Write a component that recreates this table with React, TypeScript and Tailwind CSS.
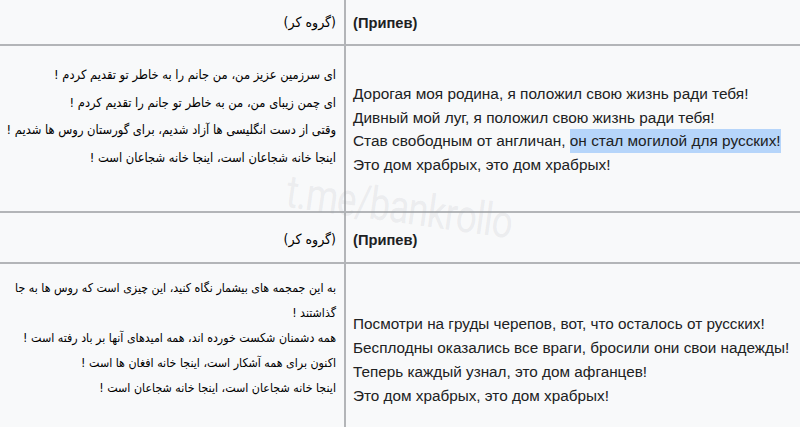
import React from 'react';

const fa = "font-['DejaVu_Sans_Condensed','DejaVu_Sans',sans-serif]";
const ru = "font-['Liberation_Sans',Arial,sans-serif]";

const verse1Fa = [
  'ای سرزمین عزیز من، من جانم را به خاطر تو تقدیم کردم !',
  'ای چمن زیبای من، من به خاطر تو جانم را تقدیم کردم !',
  'وقتی از دست انگلیسی ها آزاد شدیم، برای گورستان روس ها شدیم !',
  'اینجا خانه شجاعان است، اینجا خانه شجاعان است !',
];

const verse2Fa = [
  'به این جمجمه های بیشمار نگاه کنید، این چیزی است که روس ها به جا',
  'گذاشتند !',
  'همه دشمنان شکست خورده اند، همه امیدهای آنها بر باد رفته است !',
  'اکنون برای همه آشکار است، اینجا خانه افغان ها است !',
  'اینجا خانه شجاعان است، اینجا خانه شجاعان است !',
];

const verse2Ru = [
  'Посмотри на груды черепов, вот, что осталось от русских!',
  'Бесплодны оказались все враги, бросили они свои надежды!',
  'Теперь каждый узнал, это дом афганцев!',
  'Это дом храбрых, это дом храбрых!',
];

const FaCell = ({ lines, className }: { lines: string[]; className: string }) => (
  <div dir="rtl" className={`border-r-2 border-[#b3b5b8] pr-2 text-right text-black whitespace-nowrap ${fa} ${className}`}>
    {lines.map(l => (
      <div key={l}>{l}</div>
    ))}
  </div>
);

export default function App() {
  return (
    <div className="relative w-[800px] h-[427px] overflow-hidden bg-[#f8f9fa]">
      <div className="grid grid-cols-[346px_1fr]">
        {/* chorus */}
        <FaCell lines={['(گروه کر)']} className="h-[46px] border-b-2 border-b-[#b3b5b8] pt-[11px] text-[14px] leading-[22px]" />
        <div className={`h-[46px] border-b-2 border-[#b3b5b8] pl-[7px] pt-[12px] text-[14.7px] font-bold leading-[22px] text-[#202122] ${ru}`}>(Припев)</div>

        {/* verse 1 */}
        <FaCell lines={verse1Fa} className="h-[167px] border-b-2 border-b-[#b3b5b8] pt-[15px] text-[12.8px] leading-[27.7px]" />
        <div className={`h-[167px] border-b-2 border-[#b3b5b8] pl-[7px] pt-[36px] text-[15.4px] leading-[23.5px] text-[#202122] ${ru}`}>
          <div>Дорогая моя родина, я положил свою жизнь ради тебя!</div>
          <div>Дивный мой луг, я положил свою жизнь ради тебя!</div>
          <div>
            Став свободным от англичан, <span className="inline-block bg-[#b6d5fa]">он стал могилой для русских!</span>
          </div>
          <div>Это дом храбрых, это дом храбрых!</div>
        </div>

        {/* chorus */}
        <FaCell lines={['(گروه کر)']} className="h-[51px] border-b-2 border-b-[#b3b5b8] pt-[15px] text-[14px] leading-[22px]" />
        <div className={`h-[51px] border-b-2 border-[#b3b5b8] pl-[7px] pt-[16px] text-[14.7px] font-bold leading-[22px] text-[#202122] ${ru}`}>(Припев)</div>

        {/* verse 2 */}
        <FaCell lines={verse2Fa} className="h-[170px] pt-[12px] text-[12.3px] leading-[25px]" />
        <div className={`h-[170px] pl-[7px] pt-[48px] text-[15.3px] leading-[24px] text-[#202122] ${ru}`}>
          {verse2Ru.map(l => (
            <div key={l}>{l}</div>
          ))}
        </div>
      </div>

      {/* watermark */}
      <div className="pointer-events-none absolute left-[290px] top-[168px] origin-top-left text-[46px] leading-none tracking-tight text-[#9aa0a6]/15 font-['Roboto',sans-serif] [transform:rotate(8deg)_scaleX(0.8)]">
        t.me/bankrollo
      </div>
    </div>
  );
}
